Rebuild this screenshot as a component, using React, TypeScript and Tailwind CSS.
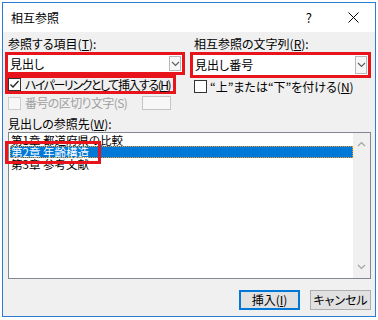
import React from 'react';

const FONT = "font-['Noto_Sans_CJK_JP',sans-serif] [font-feature-settings:'palt']";
const RED = 'border-[#e8141c]';

function Chevron({ up = false, color = '#606060' }: { up?: boolean; color?: string }) {
  return (
    <svg width="9" height="6" viewBox="0 0 9 6">
      <polyline
        points={up ? '1,5 4.5,1.5 8,5' : '1,1 4.5,4.5 8,1'}
        fill="none"
        stroke={color}
        strokeWidth="1.2"
      />
    </svg>
  );
}

function Check({ checked = false, disabled = false }: { checked?: boolean; disabled?: boolean }) {
  return (
    <div
      className={`w-[13px] h-[13px] shrink-0 border flex items-center justify-center ${
        disabled ? 'border-[#cccccc] bg-[#f7f7f7]' : 'border-[#333333] bg-white'
      }`}
    >
      {checked && (
        <svg width="11" height="11" viewBox="0 0 11 11">
          <polyline points="1.5,5.5 4,8 9.5,2" fill="none" stroke="#222" strokeWidth="1.3" />
        </svg>
      )}
    </div>
  );
}

function Combo({ value, height }: { value: string; height: string }) {
  return (
    <div className={`flex bg-white ${height}`}>
      <div className="flex-1 pl-[2px] flex items-center text-[12px] leading-[14px]">{value}</div>
      <div className="w-[12px] my-[1px] mr-[1px] border border-[#b8b8b8] bg-[#f7f7f7] flex items-center justify-center">
        <Chevron />
      </div>
    </div>
  );
}

export default function App() {
  return (
    <div className={`w-[378px] h-[320px] bg-white overflow-hidden text-black ${FONT}`}>
      <div className="ml-[2px] mt-[2px] w-[374px] h-[315px] border border-[#2b7cd3] bg-[#f0f0f0] flex flex-col">
        {/* title bar */}
        <div className="h-[29px] bg-white flex items-center pl-[8px] text-[12px] leading-[14px]">
          <span>相互参照</span>
          <span className="ml-auto text-[13px] pr-[36px]">?</span>
          <svg width="11" height="11" viewBox="0 0 11 11" className="mr-[16px]">
            <path d="M0.5,0.5 L10.5,10.5 M10.5,0.5 L0.5,10.5" stroke="#000" strokeWidth="1" />
          </svg>
        </div>

        <div className="flex-1 flex flex-col pt-[5px] text-[12px] leading-[14px]">
          <div className="flex">
            {/* left column */}
            <div className="w-[183px] pl-[2px]">
              <div className="pl-[3px] h-[14px]">
                参照する項目(<u>T</u>):
              </div>
              <div className={`mt-[1px] w-[180px] h-[23px] border-[3px] ${RED}`}>
                <Combo value="見出し" height="h-[17px]" />
              </div>
              <div className={`w-[171px] h-[19px] border-[3px] ${RED} flex items-center gap-[4px]`}>
                <Check checked />
                <span className="whitespace-nowrap tracking-[-1.45px]">
                  ハイパーリンクとして挿入する(<u>H</u>)
                </span>
              </div>
              <div className="mt-[2px] pl-[3px] h-[14px] flex items-center gap-[4px]">
                <Check disabled />
                <span className="text-[#a0a0a0] w-[113px] tracking-[-0.6px]">番号の区切り文字(S)</span>
                <div className="w-[29px] h-[14px] border border-[#c4c4c4] bg-[#f7f7f7]" />
              </div>
            </div>

            {/* right column */}
            <div className="ml-[4px] w-[181px]">
              <div className="pl-[4px] h-[14px]">
                相互参照の文字列(<u>R</u>):
              </div>
              <div className={`mt-[1px] h-[26px] border-[3px] ${RED}`}>
                <Combo value="見出し番号" height="h-[20px]" />
              </div>
              <div className="mt-[2px] pl-[4px] h-[13px] flex items-center gap-[3px]">
                <Check />
                <span className="whitespace-nowrap">
                  “上”または“下”を付ける(<u>N</u>)
                </span>
              </div>
            </div>
          </div>

          <div className="mt-[7px] pl-[5px] h-[14px]">
            見出しの参照先(<u>W</u>):
          </div>

          {/* list box */}
          <div className="relative mt-[1px] ml-[5px] w-[363px] h-[147px] border border-[#828790] bg-white flex">
            <div className="flex-1 pt-[1px] pl-[1px] text-[11.5px]">
              <div className="h-[12px] leading-[12px] pl-[1px]">第1章 都道府県の比較</div>
              <div className="h-[12px] leading-[12px] pl-[1px] bg-[#0078d7] text-white outline outline-1 outline-dotted outline-[#f59a23] -outline-offset-1">
                第2章 年齢構造
              </div>
              <div className="h-[12px] leading-[12px] pl-[1px]">第3章 参考文献</div>
            </div>
            <div className="w-[17px] bg-[#f0f0f0] flex flex-col items-center justify-between py-[8px]">
              <Chevron up color="#a3a3a3" />
              <Chevron color="#a3a3a3" />
            </div>
            <div className={`absolute left-[-4px] top-[8px] w-[96px] h-[23px] border-[3px] ${RED}`} />
          </div>

          {/* buttons */}
          <div className="mt-[11px] flex justify-end gap-[10px] pr-[4px]">
            <button className="w-[61px] h-[20px] border-2 border-[#0078d7] bg-[#e1e1e1] text-[12px] leading-[14px]">
              挿入(<u>I</u>)
            </button>
            <button className="w-[61px] h-[20px] border border-[#adadad] bg-[#e1e1e1] text-[12px] leading-[14px]">
              キャンセル
            </button>
          </div>
        </div>
      </div>
    </div>
  );
}
